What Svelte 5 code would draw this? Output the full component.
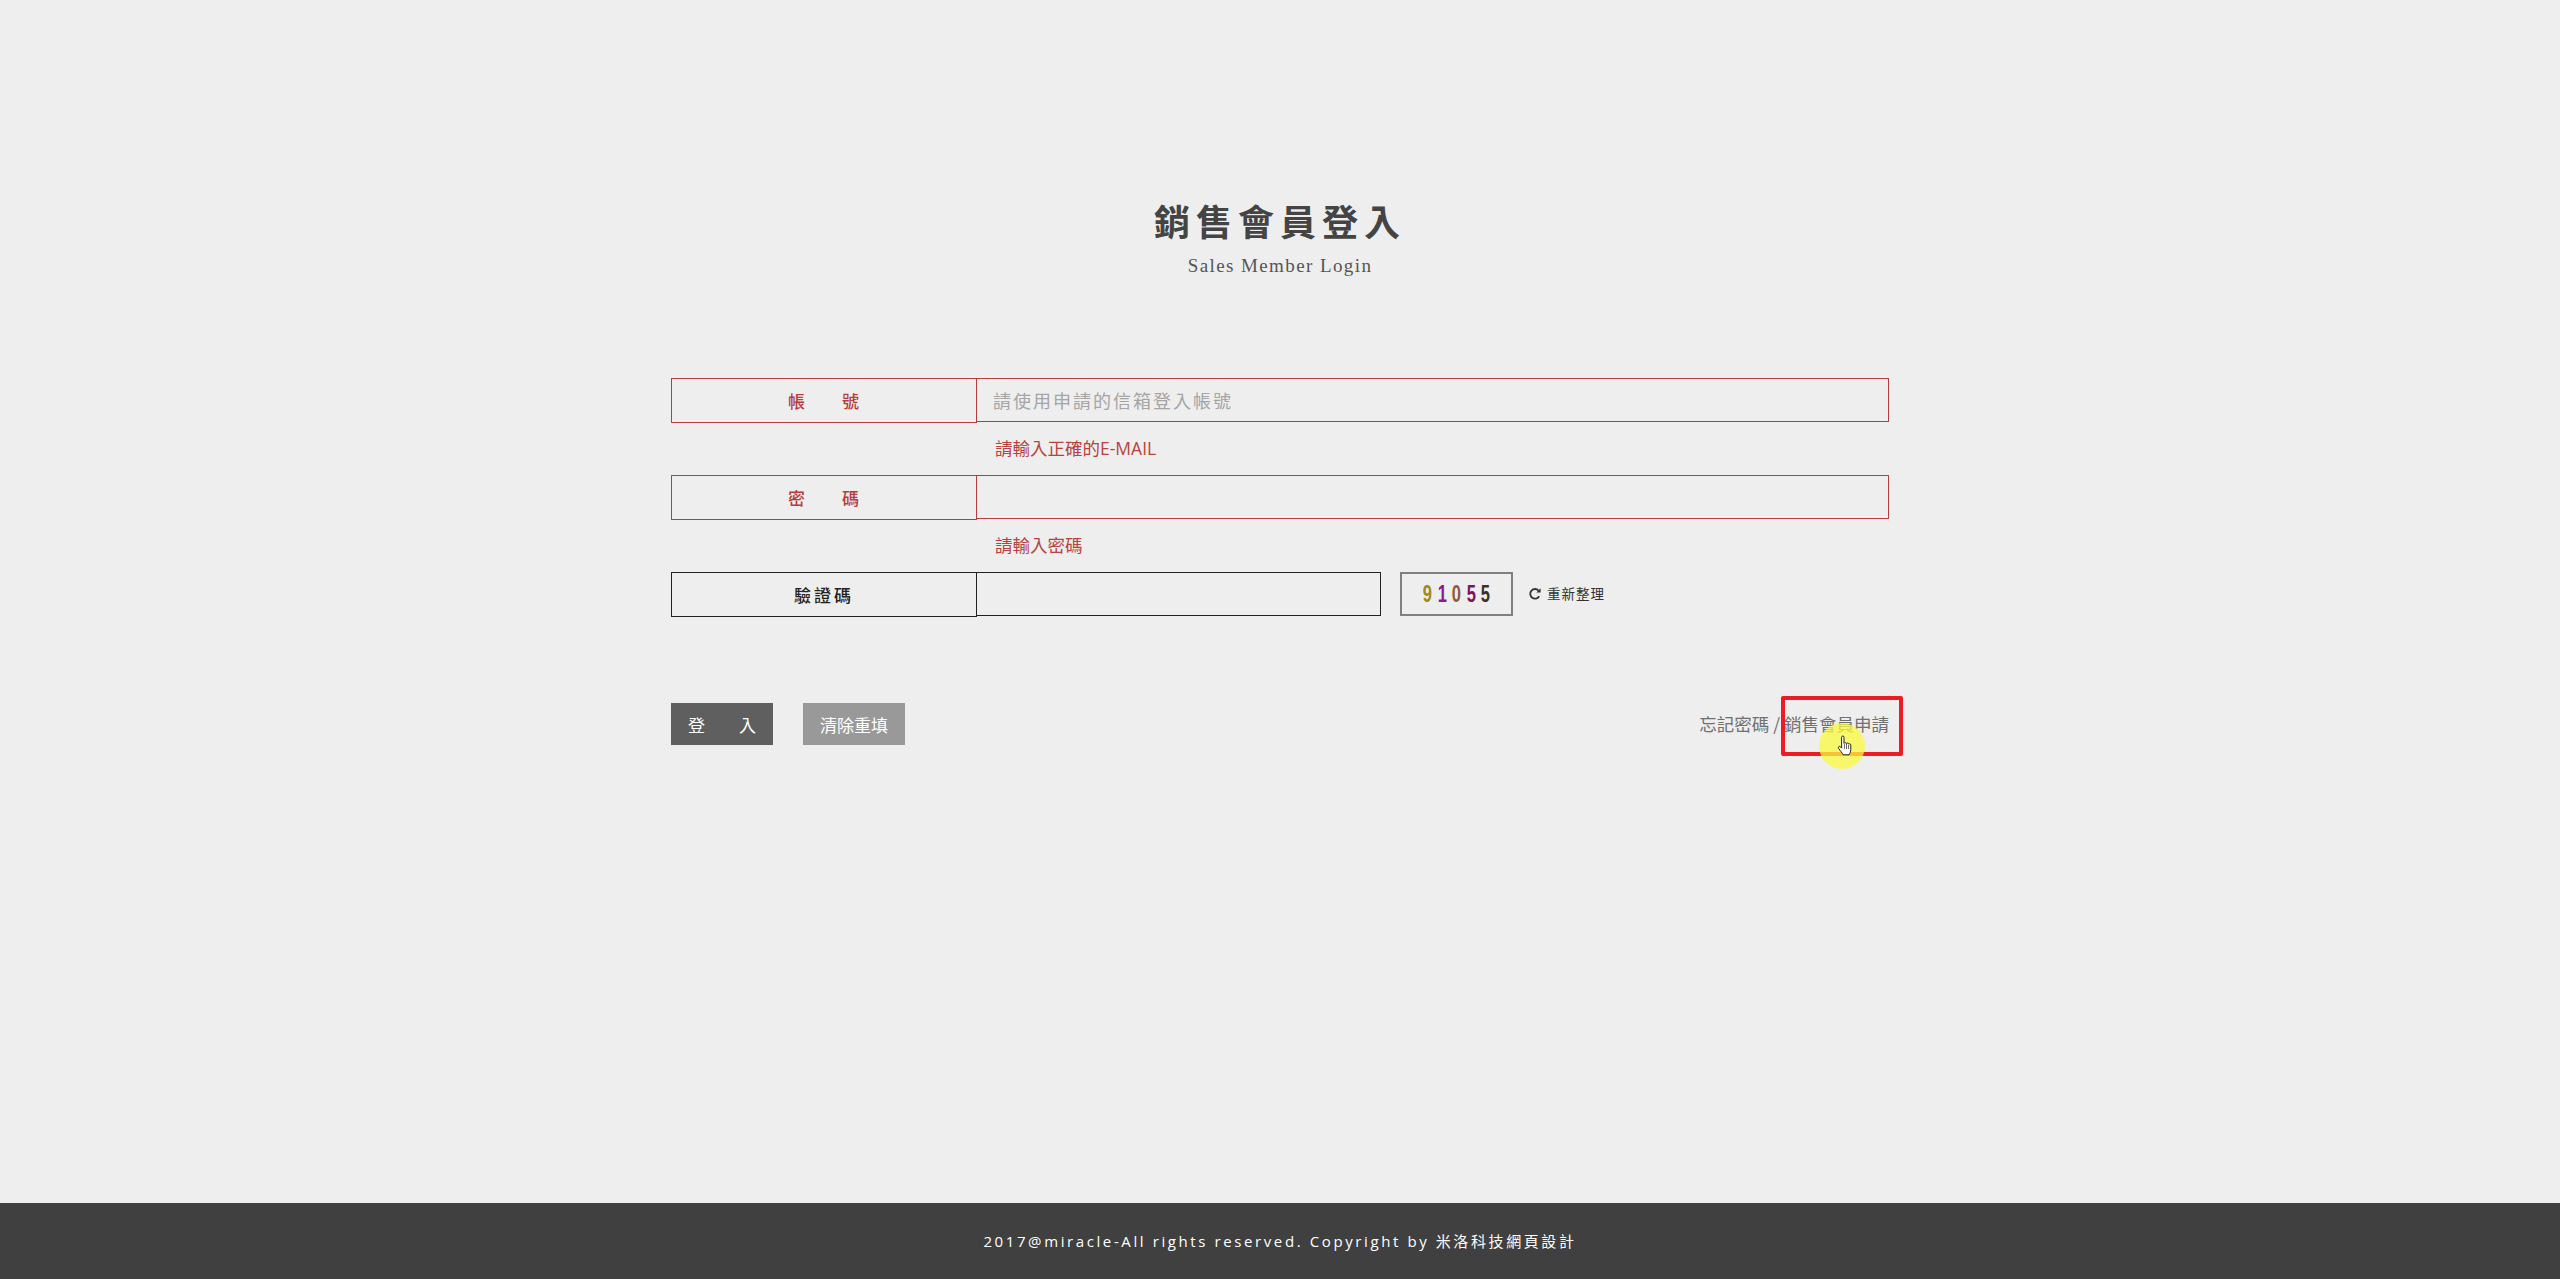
<script>
  const fields = [
    { label: '帳　　號', placeholder: '請使用申請的信箱登入帳號', error: '請輸入正確的E-MAIL' },
    { label: '密　　碼', placeholder: '', error: '請輸入密碼' }
  ];
  const code = [
    { c: '9', color: '#a08a20' },
    { c: '1', color: '#8a1a8a' },
    { c: '0', color: '#8f5a3a' },
    { c: '5', color: '#7a1560' },
    { c: '5', color: '#40302a' }
  ];
</script>

<div class="page">
  <main class="main">
    <header class="head">
      <h1>銷售會員登入</h1>
      <p>Sales Member Login</p>
    </header>

    <form class="form" onsubmit={(e) => e.preventDefault()}>
      {#each fields as f}
        <div class="row invalid">
          <div class="label">{f.label}</div>
          <input class="input" placeholder={f.placeholder} />
        </div>
        <div class="error">{f.error}</div>
      {/each}

      <div class="row captcha-row">
        <div class="label">驗證碼</div>
        <input class="input short" />
        <div class="captcha">
          {#each code as d}
            <span style="color: {d.color}">{d.c}</span>
          {/each}
        </div>
        <a class="refresh" href="#r">
          <svg viewBox="0 0 14 14" width="14" height="14" aria-hidden="true">
            <path d="M11.2 9.2A4.8 4.8 0 1 1 10.6 3.6" fill="none" stroke="#333" stroke-width="1.8" />
            <path d="M8.4 5.4 L12.6 5.4 L12.6 1.2 Z" fill="#333" />
          </svg>
          <span>重新整理</span>
        </a>
      </div>

      <div class="actions">
        <button class="btn dark" type="submit">登　　入</button>
        <button class="btn light" type="reset">清除重填</button>
        <div class="links">
          <a href="#f">忘記密碼</a> / <a href="#a">銷售會員申請</a>
          <span class="mark"></span>
          <span class="spot"></span>
          <svg class="hand" viewBox="0 0 16 22" width="16" height="22" aria-hidden="true">
            <path d="M4.6 2.2c0-1.6 2.400-1.600 2.400 0v6.200c.4-1.200 2.300-1 2.400.3.500-1 2.200-.8 2.300.5.600-.8 2.100-.5 2.100.9v4.400c0 2.300-1 3.700-1.700 5.300H6.200c-1-2-3-3.800-4.600-6.600-.8-1.500 1-2.500 2-1.300l1 1.200Z" fill="#fff" stroke="#222" stroke-width="1" stroke-linejoin="round" />
            <path d="M7.400 9v5M9.500 9v5M11.600 10v4" stroke="#222" stroke-width=".7" fill="none" />
          </svg>
        </div>
      </div>
    </form>
  </main>

  <footer class="footer">2017@miracle-All rights reserved. Copyright by 米洛科技網頁設計</footer>
</div>

<style>
  :global(body) {
    margin: 0;
    background: #eeeeee;
    font-family: "Open Sans", "Noto Sans CJK TC", sans-serif;
  }
  .page {
    min-height: 1279px;
    display: flex;
    flex-direction: column;
  }
  .main {
    flex: 1;
    width: 1218px;
    margin: 0 auto;
    padding-top: 198px;
    box-sizing: border-box;
  }
  .head {
    text-align: center;
    height: 180px;
  }
  h1 {
    margin: 0;
    font: 700 36px/44px "Noto Sans CJK TC", sans-serif;
    letter-spacing: 6px;
    color: #444;
  }
  .head p {
    margin: 12px 0 0;
    font: 400 19px/24px "Liberation Serif", serif;
    letter-spacing: 1.4px;
    color: #555;
  }
  .row {
    display: flex;
    height: 45px;
    align-items: stretch;
  }
  .label {
    width: 306px;
    box-sizing: border-box;
    border: 1px solid currentColor;
    display: flex;
    align-items: center;
    justify-content: center;
    font: 500 17px/1 "Noto Sans CJK TC", sans-serif;
    letter-spacing: 1px;
  }
  .invalid .label {
    color: #b73c3c;
  }
  .captcha-row .label {
    color: #222;
    letter-spacing: 3px;
  }
  .input {
    flex: 1;
    min-width: 0;
    box-sizing: border-box;
    height: 44px;
    margin: 0;
    padding: 0 16px;
    border: 1px solid #b73c3c;
    border-left: 0;
    background: transparent;
    font: 400 18px/1 "Noto Sans CJK TC", sans-serif;
    letter-spacing: 2px;
    outline: none;
  }
  .input::placeholder {
    color: #a5a5a5;
    opacity: 1;
  }
  .captcha-row .input {
    border-color: #222;
  }
  .input.short {
    flex: 0 0 404px;
  }
  .error {
    height: 52px;
    padding: 13px 0 0 324px;
    box-sizing: border-box;
    font: 400 17.500px/24px "Open Sans", "Noto Sans CJK TC", sans-serif;
    color: #b5433f;
  }
  .captcha {
    width: 113px;
    height: 44px;
    box-sizing: border-box;
    margin-left: 19px;
    border: 2px solid #808080;
    display: flex;
    align-items: center;
    justify-content: center;
    font: 700 23px/1 "Liberation Sans", sans-serif;
  }
  .captcha span {
    display: inline-block;
    width: 14.500px;
    text-align: center;
    transform: scaleX(0.72);
  }
  .refresh {
    margin-left: 15px;
    display: flex;
    align-items: center;
    gap: 5px;
    height: 44px;
    font: 400 13.500px/1 "Noto Sans CJK TC", sans-serif;
    letter-spacing: 1px;
    color: #333;
    text-decoration: none;
  }
  .actions {
    display: flex;
    align-items: center;
    margin-top: 86px;
    height: 42px;
  }
  .btn {
    width: 102px;
    height: 42px;
    padding: 0;
    border: 0;
    color: #fff;
    font: 400 17px/1 "Noto Sans CJK TC", sans-serif;
  }
  .dark {
    background: #5f5f5f;
    margin-right: 30px;
  }
  .light {
    background: #999999;
  }
  .links {
    position: relative;
    margin-left: auto;
    font: 400 17.500px/24px "Noto Sans CJK TC", sans-serif;
    color: #707070;
  }
  .links a {
    color: inherit;
    text-decoration: none;
  }
  .mark {
    position: absolute;
    right: -14px;
    top: -16px;
    width: 122px;
    height: 60px;
    box-sizing: border-box;
    border: 4px solid #ed1c24;
    border-radius: 2px;
  }
  .spot {
    position: absolute;
    right: 24px;
    top: 11px;
    width: 46px;
    height: 46px;
    border-radius: 50%;
    background: rgba(250, 250, 60, 0.75);
  }
  .hand {
    position: absolute;
    right: 36px;
    top: 23px;
  }
  .footer {
    height: 76px;
    background: #404040;
    color: #fff;
    display: flex;
    align-items: center;
    justify-content: center;
    font: 400 15px/1 "Open Sans", "Noto Sans CJK TC", sans-serif;
    letter-spacing: 2.6px;
  }
</style>
